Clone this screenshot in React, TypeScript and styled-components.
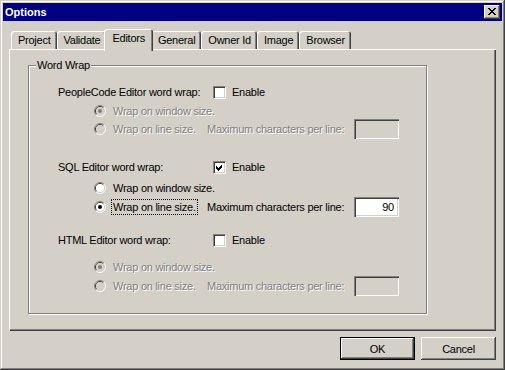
import React from 'react';
import styled, { createGlobalStyle } from 'styled-components';

const FACE = '#d4d0c8';

const GlobalStyle = createGlobalStyle`
  html, body {
    margin: 0;
    padding: 0;
    background: ${FACE};
  }
  body {
    font-family: "Liberation Sans", Arial, sans-serif;
    font-size: 11px;
  }
`;

const Window = styled.div`
  box-sizing: border-box;
  width: 505px;
  height: 370px;
  padding: 3px;
  background: ${FACE};
  box-shadow: inset -1px -1px #404040, inset 1px 1px ${FACE}, inset -2px -2px #808080, inset 2px 2px #fff;
  display: flex;
  flex-direction: column;
  color: #000;
  font-family: "Liberation Sans", Arial, sans-serif;
  font-size: 11px;
  letter-spacing: -0.25px;
`;

const TitleBar = styled.div`
  height: 18px;
  flex: none;
  background: #000080;
  color: #fff;
  display: flex;
  align-items: center;
  justify-content: space-between;
  padding: 0 2px;
`;

const Title = styled.span`
  font-weight: bold;
  font-size: 11px;
  line-height: 18px;
  letter-spacing: 0;
`;

const CloseButton = styled.span`
  box-sizing: border-box;
  width: 16px;
  height: 14px;
  background: ${FACE};
  box-shadow: inset -1px -1px #404040, inset 1px 1px #fff, inset -2px -2px #808080;
  display: flex;
  align-items: center;
  justify-content: center;
  padding-bottom: 1px;
`;

const Body = styled.div`
  display: flex;
  flex-direction: column;
  padding: 8px 6px 0 6px;
`;

const TabStrip = styled.div`
  display: flex;
  align-items: flex-end;
  height: 20px;
  padding-left: 2px;
  position: relative;
  z-index: 1;
`;

const Tab = styled.div<{ $active?: boolean }>`
  box-sizing: border-box;
  height: ${p => (p.$active ? 22 : 18)}px;
  margin: ${p => (p.$active ? '0 -2px -2px -2px' : '0')};
  padding: 3px ${p => (p.$active ? 8 : 6)}px 0 ${p => (p.$active ? 8 : 7)}px;
  line-height: 13px;
  background: ${FACE};
  border-radius: 3px 3px 0 0;
  box-shadow: inset 1px 1px #fff, inset -1px 0 #404040, inset -2px 0 #808080;
  position: relative;
  z-index: ${p => (p.$active ? 2 : 1)};
  white-space: nowrap;
`;

const Panel = styled.div`
  box-sizing: border-box;
  height: 282px;
  padding: 16px 0 0 19px;
  box-shadow: inset 1px 1px #fff, inset -1px -1px #404040, inset -2px -2px #808080;
`;

const Group = styled.div`
  box-sizing: border-box;
  width: 399px;
  height: 249px;
  border: 1px solid #808080;
  box-shadow: inset 1px 1px #fff, 1px 1px #fff;
  position: relative;
  padding: 0 0 0 29px;
  display: flex;
  flex-direction: column;
`;

const Legend = styled.span`
  position: absolute;
  top: -7px;
  left: 7px;
  padding: 0 1px;
  line-height: 13px;
  background: ${FACE};
`;

const HeaderRow = styled.div<{ $mt: number }>`
  display: flex;
  align-items: center;
  height: 16px;
  margin-top: ${p => p.$mt}px;
`;

const HeadLabel = styled.span`
  width: 155px;
  flex: none;
  white-space: nowrap;
`;

const CheckBox = styled.span`
  box-sizing: border-box;
  width: 13px;
  height: 13px;
  flex: none;
  margin-right: 6px;
  background: #fff;
  border: 1px solid;
  border-color: #808080 #fff #fff #808080;
  box-shadow: inset 1px 1px #404040, inset -1px -1px ${FACE};
  display: flex;
`;

const RadioRow = styled.div<{ $mt: number; $h: number }>`
  display: flex;
  align-items: center;
  height: ${p => p.$h}px;
  margin-top: ${p => p.$mt}px;
  padding-left: 36px;
`;

const RadioOption = styled.span<{ $w?: number }>`
  display: flex;
  align-items: center;
  flex: none;
  width: ${p => (p.$w ? `${p.$w}px` : 'auto')};
`;

const RadioText = styled.span<{ $disabled?: boolean; $focus?: boolean }>`
  line-height: 14px;
  padding: 0 1px;
  border: 1px dotted ${p => (p.$focus ? '#000' : 'transparent')};
  color: ${p => (p.$disabled ? '#808080' : '#000')};
  text-shadow: ${p => (p.$disabled ? '1px 1px 0 #fff' : 'none')};
  white-space: nowrap;
`;

const MaxLabel = styled.span<{ $disabled?: boolean }>`
  width: 147px;
  flex: none;
  color: ${p => (p.$disabled ? '#808080' : '#000')};
  text-shadow: ${p => (p.$disabled ? '1px 1px 0 #fff' : 'none')};
  white-space: nowrap;
`;

const TextBox = styled.span<{ $disabled?: boolean }>`
  box-sizing: border-box;
  width: 45px;
  height: 20px;
  flex: none;
  background: ${p => (p.$disabled ? FACE : '#fff')};
  box-shadow: inset 1px 1px #808080, inset 2px 2px #404040, inset -1px -1px #fff, inset -2px -2px ${FACE};
  display: flex;
  align-items: center;
  justify-content: flex-end;
  padding-right: 5px;
  line-height: 14px;
`;

const Footer = styled.div`
  display: flex;
  justify-content: flex-end;
  gap: 6px;
  margin-top: 6px;
`;

const Button = styled.button<{ $default?: boolean }>`
  box-sizing: border-box;
  width: 75px;
  height: 23px;
  padding: 0;
  font-family: "Liberation Sans", Arial, sans-serif;
  font-size: 11px;
  letter-spacing: -0.25px;
  color: #000;
  background: ${FACE};
  border: ${p => (p.$default ? '1px solid #000' : 'none')};
  box-shadow: inset -1px -1px #404040, inset 1px 1px #fff, inset -2px -2px #808080, inset 2px 2px ${FACE};
`;

const Radio = ({ checked, disabled }: { checked: boolean; disabled: boolean }) => (
  <svg width="12" height="12" viewBox="0 0 12 12" style={{ flex: 'none', marginRight: 5 }}>
    <path d="M9.89 2.11 A5.5 5.5 0 0 0 2.11 9.89" fill="none" stroke="#808080" />
    <path d="M2.11 9.89 A5.5 5.5 0 0 0 9.89 2.11" fill="none" stroke="#fff" />
    <path d="M9.18 2.82 A4.5 4.5 0 0 0 2.82 9.18" fill="none" stroke="#404040" />
    <path d="M2.82 9.18 A4.5 4.5 0 0 0 9.18 2.82" fill="none" stroke={FACE} />
    <circle cx="6" cy="6" r="4" fill={disabled ? FACE : '#fff'} />
    {checked && <circle cx="6" cy="6" r="2" fill={disabled ? '#808080' : '#000'} />}
  </svg>
);

const Check = () => (
  <svg width="11" height="11" viewBox="0 0 11 11" shapeRendering="crispEdges">
    <polygon points="2,4 4,6 8,2 8,5 4,9 2,7" fill="#000" />
  </svg>
);

const CloseGlyph = () => {
  const rows = [
    [0, 1, 6, 7], [1, 2, 5, 6], [2, 5], [3, 4], [2, 5], [1, 2, 5, 6], [0, 1, 6, 7],
  ];
  return (
    <svg width="8" height="7" viewBox="0 0 8 7" shapeRendering="crispEdges">
      {rows.map((r, y) => (
        <React.Fragment key={y}>
          <rect x={r[0]} y={y} width={r[1] - r[0] + 1} height={1} fill="#000" />
          {r.length > 2 && <rect x={r[2]} y={y} width={r[3] - r[2] + 1} height={1} fill="#000" />}
        </React.Fragment>
      ))}
    </svg>
  );
};

interface Section {
  title: string;
  enabled: boolean;
  lineMode: boolean;
  value: string;
  mt: [number, number, number];
}

const sections: Section[] = [
  { title: 'PeopleCode Editor word wrap:', enabled: false, lineMode: false, value: '', mt: [18, 3, 0] },
  { title: 'SQL Editor word wrap:', enabled: true, lineMode: true, value: '90', mt: [20, 5, 1] },
  { title: 'HTML Editor word wrap:', enabled: false, lineMode: false, value: '', mt: [15, 11, 1] },
];

const tabs = ['Project', 'Validate', 'Editors', 'General', 'Owner Id', 'Image', 'Browser'];

const EditorSection = ({ s }: { s: Section }) => {
  const off = !s.enabled;
  return (
    <>
      <HeaderRow $mt={s.mt[0]}>
        <HeadLabel>{s.title}</HeadLabel>
        <CheckBox>{s.enabled && <Check />}</CheckBox>
        <span>Enable</span>
      </HeaderRow>
      <RadioRow $mt={s.mt[1]} $h={16}>
        <RadioOption>
          <Radio checked={!s.lineMode} disabled={off} />
          <RadioText $disabled={off}>Wrap on window size.</RadioText>
        </RadioOption>
      </RadioRow>
      <RadioRow $mt={s.mt[2]} $h={20}>
        <RadioOption $w={113}>
          <Radio checked={s.lineMode} disabled={off} />
          <RadioText $disabled={off} $focus={s.enabled}>Wrap on line size.</RadioText>
        </RadioOption>
        <MaxLabel $disabled={off}>Maximum characters per line:</MaxLabel>
        <TextBox $disabled={off}>{s.value}</TextBox>
      </RadioRow>
    </>
  );
};

export default function App() {
  return (
    <>
      <GlobalStyle />
      <Window>
        <TitleBar>
          <Title>Options</Title>
          <CloseButton>
            <CloseGlyph />
          </CloseButton>
        </TitleBar>
        <Body>
          <TabStrip>
            {tabs.map(t => (
              <Tab key={t} $active={t === 'Editors'}>
                {t}
              </Tab>
            ))}
          </TabStrip>
          <Panel>
            <Group>
              <Legend>Word Wrap</Legend>
              {sections.map(s => (
                <EditorSection key={s.title} s={s} />
              ))}
            </Group>
          </Panel>
          <Footer>
            <Button $default>OK</Button>
            <Button>Cancel</Button>
          </Footer>
        </Body>
      </Window>
    </>
  );
}
